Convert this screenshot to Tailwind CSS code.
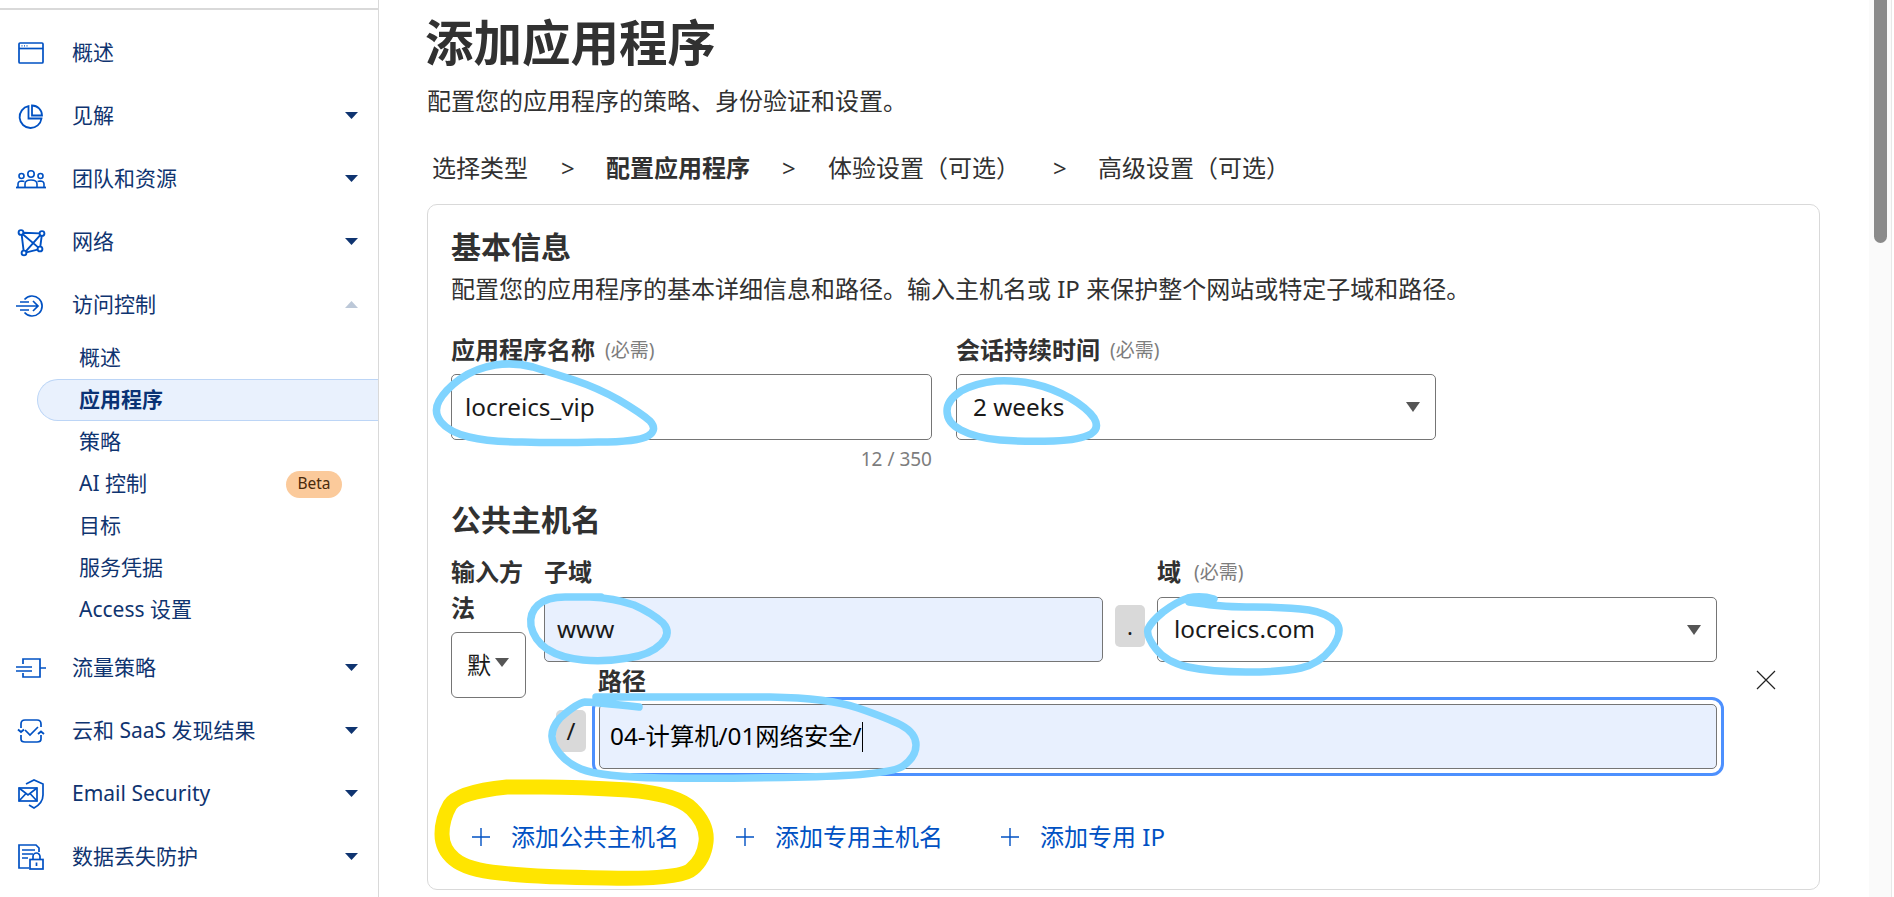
<!DOCTYPE html>
<html lang="zh">
<head>
<meta charset="utf-8">
<title>添加应用程序</title>
<script src="https://cdn.jsdelivr.net/npm/@tailwindcss/browser@4"></script>
</head>
<body class="bg-white">
<div class="relative flex h-[897px] w-[1894px] overflow-hidden bg-white font-['Noto_Sans','Noto_Sans_CJK_SC',sans-serif] text-[#313131]">

  <!-- Sidebar -->
  <aside class="h-full w-[379px] shrink-0 border-r border-[#d9d9d9] text-[21px] text-[#0f3470]">
    <div class="h-[10px] border-b-2 border-[#d9d9d9]"></div>
    <nav class="pt-[11px]">
      <a class="flex h-[63px] items-center pl-[15px]">
        <svg class="h-8 w-8 shrink-0" viewBox="0 0 32 32" fill="none" stroke="#0051c3" stroke-width="1.7"><rect x="4" y="6" width="24" height="20" rx="1"/><path d="M4 11.5H28"/><path d="M6.5 8.8H7.5M9 8.8H10M11.5 8.8H12.5" stroke-width="1.2"/></svg>
        <span class="ml-[25px] flex-1">概述</span>
      </a>
      <a class="flex h-[63px] items-center pl-[15px]">
        <svg class="h-8 w-8 shrink-0" viewBox="0 0 32 32" fill="none" stroke="#0051c3" stroke-width="1.8"><path d="M26.5 18.5A11 11 0 1 1 13.5 6.2V18.5Z"/><path d="M17 5.5A10 10 0 0 1 27 15.5H17Z"/></svg>
        <span class="ml-[25px] flex-1">见解</span>
        <svg class="mr-[20px] h-[7px] w-[13px]" viewBox="0 0 13 7"><path d="M0 0H13L6.5 7Z" fill="#0f3470"/></svg>
      </a>
      <a class="flex h-[63px] items-center pl-[15px]">
        <svg class="h-8 w-8 shrink-0" viewBox="0 0 32 32" fill="none" stroke="#0051c3" stroke-width="1.6"><circle cx="16" cy="11" r="3.2"/><circle cx="6.5" cy="13" r="2.5"/><circle cx="25.5" cy="13" r="2.5"/><path d="M10 24V21Q10 17 16 17T22 21V24"/><path d="M3 24V21Q3 18 7 18L9.5 18.5M29 24V21Q29 18 25 18L22.5 18.5"/><path d="M1 24.5H31" stroke-width="1.8"/></svg>
        <span class="ml-[25px] flex-1">团队和资源</span>
        <svg class="mr-[20px] h-[7px] w-[13px]" viewBox="0 0 13 7"><path d="M0 0H13L6.5 7Z" fill="#0f3470"/></svg>
      </a>
      <a class="flex h-[63px] items-center pl-[15px]">
        <svg class="h-8 w-8 shrink-0" viewBox="0 0 32 32" fill="none" stroke="#0051c3" stroke-width="1.9"><circle cx="6" cy="6.5" r="2.4"/><circle cx="27" cy="7.5" r="2.4"/><circle cx="9" cy="27" r="2.4"/><circle cx="25" cy="23" r="2.4"/><path d="M8.4 6.7L24.6 7.4M6.7 8.8L8.6 24.6M11.3 26.4L22.7 23.6M26.7 9.9L25.3 20.6M7.8 8.2L23.2 21.4M25.2 9.1L10.8 25.4"/></svg>
        <span class="ml-[25px] flex-1">网络</span>
        <svg class="mr-[20px] h-[7px] w-[13px]" viewBox="0 0 13 7"><path d="M0 0H13L6.5 7Z" fill="#0f3470"/></svg>
      </a>
      <a class="flex h-[63px] items-center pl-[15px]">
        <svg class="h-8 w-8 shrink-0" viewBox="0 0 32 32" fill="none" stroke="#0051c3" stroke-width="1.7"><path d="M9.5 10.5A10 10 0 1 1 9.5 23.5"/><path d="M1 17H23M18 12L23 17L18 22M5 13H14M5 21H14"/></svg>
        <span class="ml-[25px] flex-1">访问控制</span>
        <svg class="mr-[20px] h-[7px] w-[13px]" viewBox="0 0 13 7"><path d="M0 7H13L6.5 0Z" fill="#bcc8d8"/></svg>
      </a>
      <a class="mt-px flex h-[42px] items-center pl-[79px]">概述</a>
      <a class="ml-[37px] flex h-[42px] items-center rounded-l-full border border-r-0 border-[#bcd5f6] bg-[#e9f1fd] pl-[41px] font-bold text-[#0a3274]">应用程序</a>
      <a class="flex h-[42px] items-center pl-[79px]">策略</a>
      <a class="flex h-[42px] items-center pl-[79px]">
        <span class="flex-1">AI 控制</span>
        <span class="mr-[36px] flex h-[27px] w-[56px] items-center justify-center rounded-full bg-[#fbca9b] text-[15.5px] text-[#4a2a0c]">Beta</span>
      </a>
      <a class="flex h-[42px] items-center pl-[79px]">目标</a>
      <a class="flex h-[42px] items-center pl-[79px]">服务凭据</a>
      <a class="flex h-[42px] items-center pl-[79px]">Access 设置</a>
      <a class="mt-[5px] flex h-[63px] items-center pl-[15px]">
        <svg class="h-8 w-8 shrink-0" viewBox="0 0 32 32" fill="none" stroke="#0051c3" stroke-width="1.7"><path d="M8 12V7H25V25H8V21"/><path d="M1 15H17M1 19H17M25 16H31"/></svg>
        <span class="ml-[25px] flex-1">流量策略</span>
        <svg class="mr-[20px] h-[7px] w-[13px]" viewBox="0 0 13 7"><path d="M0 0H13L6.5 7Z" fill="#0f3470"/></svg>
      </a>
      <a class="flex h-[63px] items-center pl-[15px]">
        <svg class="h-8 w-8 shrink-0" viewBox="0 0 32 32" fill="none" stroke="#0051c3" stroke-width="1.7"><path d="M6 13V9Q6 5 10 5H22Q26 5 26 9V12"/><path d="M26 20V24Q26 27 22 27H10Q6 27 6 24V20"/><path d="M10 15L15 20L23 12"/><path d="M3 14.5L6 17L9 14.5M23 19L26 16.5L29 19" stroke-width="1.9"/></svg>
        <span class="ml-[25px] flex-1">云和 SaaS 发现结果</span>
        <svg class="mr-[20px] h-[7px] w-[13px]" viewBox="0 0 13 7"><path d="M0 0H13L6.5 7Z" fill="#0f3470"/></svg>
      </a>
      <a class="flex h-[63px] items-center pl-[15px]">
        <svg class="h-8 w-8 shrink-0" viewBox="0 0 32 32" fill="none" stroke="#0051c3" stroke-width="1.7"><rect x="4" y="10" width="18" height="13"/><path d="M4 10L13 17L22 10M4 23L11 15.5M22 23L15 15.5"/><path d="M11 6L19 2L28 6V17Q28 25 19 30L14 27"/></svg>
        <span class="ml-[25px] flex-1">Email Security</span>
        <svg class="mr-[20px] h-[7px] w-[13px]" viewBox="0 0 13 7"><path d="M0 0H13L6.5 7Z" fill="#0f3470"/></svg>
      </a>
      <a class="flex h-[63px] items-center pl-[15px]">
        <svg class="h-8 w-8 shrink-0" viewBox="0 0 32 32" fill="none" stroke="#0051c3" stroke-width="1.7"><path d="M14 27H4V4H21L24 7V11"/><path d="M7 9H20M7 13H18M7 17H13" stroke-width="1.4"/><rect x="15" y="18.5" width="13" height="9.5"/><path d="M18 18.5V15.5A3.5 3.5 0 0 1 25 15.5V18.5M21.5 21.5V25"/></svg>
        <span class="ml-[25px] flex-1">数据丢失防护</span>
        <svg class="mr-[20px] h-[7px] w-[13px]" viewBox="0 0 13 7"><path d="M0 0H13L6.5 7Z" fill="#0f3470"/></svg>
      </a>
    </nav>
  </aside>

  <!-- Main column -->
  <main class="min-w-0 flex-1 pl-[48px]">
    <h1 class="mt-[14px] -ml-[2px] h-[56px] text-[48.5px] leading-[56px] font-semibold">添加应用程序</h1>
    <p class="mt-[15px] h-[32px] text-[24px] leading-[32px]">配置您的应用程序的策略、身份验证和设置。</p>

    <div class="mt-[35px] flex h-[32px] items-center text-[24px] leading-[32px]">
      <span class="ml-[5px]">选择类型</span>
      <span class="ml-[33px] w-[40px]">&gt;</span>
      <span class="ml-[5px] font-bold">配置应用程序</span>
      <span class="ml-[32px] w-[40px]">&gt;</span>
      <span class="ml-[6px]">体验设置（可选）</span>
      <span class="ml-[33px] w-[45px]">&gt;</span>
      <span>高级设置（可选）</span>
    </div>

    <section class="mt-[20px] h-[686px] w-[1393px] rounded-[10px] border border-[#d9d9d9] pl-[23px] pr-[24px] pt-[22px]">
      <h2 class="h-[40px] text-[30px] leading-[40px] font-semibold">基本信息</h2>
      <p class="mt-[6px] h-[32px] text-[24px] leading-[32px]">配置您的应用程序的基本详细信息和路径。输入主机名或 IP 来保护整个网站或特定子域和路径。</p>

      <div class="mt-[29px] flex gap-[24px]">
        <div class="w-[481px]">
          <div class="flex h-[32px] items-center font-semibold text-[24px]">应用程序名称<span class="ml-[10px] text-[19px] font-normal text-[#7d7d7d]">(必需)</span></div>
          <div class="mt-[8px] flex h-[66px] items-center rounded-[5px] border border-[#757575] pl-[13px] text-[24.3px] text-[#1a1a1a]">locreics_vip</div>
          <div class="mt-[8px] h-[22px] text-right text-[19px] leading-[22px] text-[#7d7d7d]">12 / 350</div>
        </div>
        <div class="w-[480px]">
          <div class="flex h-[32px] items-center font-semibold text-[24px]">会话持续时间<span class="ml-[10px] text-[19px] font-normal text-[#7d7d7d]">(必需)</span></div>
          <div class="mt-[8px] flex h-[66px] items-center justify-between rounded-[5px] border border-[#757575] pl-[16px] pr-[15px] text-[24.3px] text-[#1a1a1a]">2 weeks
            <svg class="h-[10px] w-[14px]" viewBox="0 0 14 10"><path d="M0 0H14L7 10Z" fill="#555"/></svg>
          </div>
        </div>
      </div>

      <h2 class="mt-[30px] h-[40px] text-[30px] leading-[40px] font-semibold">公共主机名</h2>

      <div class="mt-[14px] flex items-start">
        <div class="w-[75px]">
          <div class="text-[24px] leading-[36px] font-semibold">输入方法</div>
          <div class="mt-[6px] flex h-[66px] items-center rounded-[6px] border border-[#757575] pl-[15px] text-[24px] text-[#1a1a1a]">默
            <svg class="mb-[5px] ml-[4px] h-[9px] w-[14px]" viewBox="0 0 14 9"><path d="M0 0H14L7 9Z" fill="#555"/></svg>
          </div>
        </div>

        <div class="ml-[18px] w-[1173px]">
          <div class="flex">
            <div class="w-[559px]">
              <div class="h-[36px] text-[24px] leading-[36px] font-semibold">子域</div>
              <div class="mt-[7px] flex h-[65px] items-center rounded-[5px] border border-[#757575] bg-[#e8f0fe] pl-[12px] text-[24.3px] text-[#1a1a1a]">www</div>
            </div>
            <div class="ml-[12px] mt-[51px] flex h-[42px] w-[30px] items-center justify-center rounded-[5px] bg-[#d9d9d9] text-[22px] text-[#1a1a1a]">.</div>
            <div class="ml-[12px] w-[560px]">
              <div class="flex h-[36px] items-center text-[24px] font-semibold">域<span class="ml-[13px] text-[19px] font-normal text-[#7d7d7d]">(必需)</span></div>
              <div class="mt-[7px] flex h-[65px] items-center justify-between rounded-[5px] border border-[#757575] pl-[16px] pr-[15px] text-[24.3px] text-[#1a1a1a]">locreics.com
                <svg class="h-[10px] w-[14px]" viewBox="0 0 14 10"><path d="M0 0H14L7 10Z" fill="#555"/></svg>
              </div>
            </div>
          </div>
          <div class="mt-px h-[36px] pl-[54px] text-[24px] leading-[36px] font-semibold">路径</div>
          <div class="mt-[5px] flex items-start">
            <div class="ml-[12px] mt-[6px] flex h-[42px] w-[30px] items-center justify-center rounded-[5px] bg-[#d9d9d9] text-[24px] text-[#1a1a1a]">/</div>
            <div class="ml-[13px] flex h-[65px] w-[1118px] items-center rounded-[5px] border border-[#757575] bg-[#e8f0fe] pl-[10px] text-[24.3px] text-black outline-[3px] outline-offset-[4px] outline-[#4d90fe]">04-计算机/01网络安全/<span class="h-[30px] w-px bg-black"></span></div>
          </div>
        </div>

        <svg class="ml-[39px] mt-[116px] h-[20px] w-[20px]" viewBox="0 0 20 20" fill="none" stroke="#222" stroke-width="1.2"><path d="M1 1L19 19M19 1L1 19"/></svg>
      </div>

      <div class="mt-[52px] flex h-[32px] items-center text-[24px] text-[#0051c3]">
        <svg class="ml-[21px] h-[18px] w-[18px]" viewBox="0 0 18 18" fill="none" stroke="#0051c3" stroke-width="1.4"><path d="M9 0V18M0 9H18"/></svg>
        <span class="ml-[21px]">添加公共主机名</span>
        <svg class="ml-[57px] h-[18px] w-[18px]" viewBox="0 0 18 18" fill="none" stroke="#0051c3" stroke-width="1.4"><path d="M9 0V18M0 9H18"/></svg>
        <span class="ml-[21px]">添加专用主机名</span>
        <svg class="ml-[58px] h-[18px] w-[18px]" viewBox="0 0 18 18" fill="none" stroke="#0051c3" stroke-width="1.4"><path d="M9 0V18M0 9H18"/></svg>
        <span class="ml-[21px]">添加专用 IP</span>
      </div>
    </section>
  </main>

  <!-- Scrollbar -->
  <div class="mr-[2px] h-full w-[23px] shrink-0 border-r border-[#e8e8e8] bg-[#fafafa]">
    <div class="ml-[5px] h-[243px] w-[13px] rounded-b-full bg-[#8a8a8a]"></div>
  </div>

  <!-- Hand-drawn annotations on top of the screenshot -->
  <svg class="pointer-events-none absolute inset-0 h-[897px] w-[1894px]" viewBox="0 0 1894 897" fill="none" stroke-linecap="round" stroke-linejoin="round">
    <g stroke="#80d4ff" stroke-width="7.5">
      <path d="M495 365Q476 368 460 379Q445 390 439 401Q433 412 441 422Q449 432 469 437Q489 442 522 442Q556 443 598 442Q638 442 648 436Q658 430 650 421Q641 413 619 400Q598 388 574 380Q552 373 533 367Q514 362 495 365Z"/>
      <path d="M996 381Q976 383 961 391Q947 400 947 411Q947 423 961 430Q976 438 1000 440Q1025 442 1054 441Q1080 440 1091 434Q1100 428 1094 418Q1087 408 1070 398Q1052 388 1034 384Q1016 380 996 381Z"/>
      <path d="M601 597L565 597Q547 597 538 605Q529 613 531 626Q534 640 547 649Q561 658 583 660Q605 662 628 658Q650 655 661 644Q672 633 663 623Q652 613 634 605Q614 598 590 597"/>
      <path d="M1214 599Q1201 595 1188 598Q1176 602 1163 612Q1151 622 1148 629Q1146 636 1156 649Q1166 662 1188 667Q1211 672 1246 672Q1283 672 1301 668Q1319 664 1331 649Q1344 632 1336 622Q1327 613 1309 610Q1287 607 1254 607Q1222 607 1205 604L1189 602"/>
      <path d="M639 707Q592 702 585 702Q577 703 560 718Q547 733 555 747Q564 762 581 769Q601 777 661 778Q721 779 806 777Q891 775 903 766Q916 757 916 745Q916 733 901 725Q887 718 858 708Q829 698 770 697Q712 697 654 697L596 697"/>
    </g>
    <path stroke="#ffe500" stroke-width="15" d="M507 787Q458 792 450 805Q442 819 442 834Q442 849 454 859Q467 870 500 873Q534 877 607 878Q681 880 692 869Q704 859 706 842Q708 825 692 809Q677 794 628 790Q579 787 543 787Z"/>
  </svg>
</div>
</body>
</html>
